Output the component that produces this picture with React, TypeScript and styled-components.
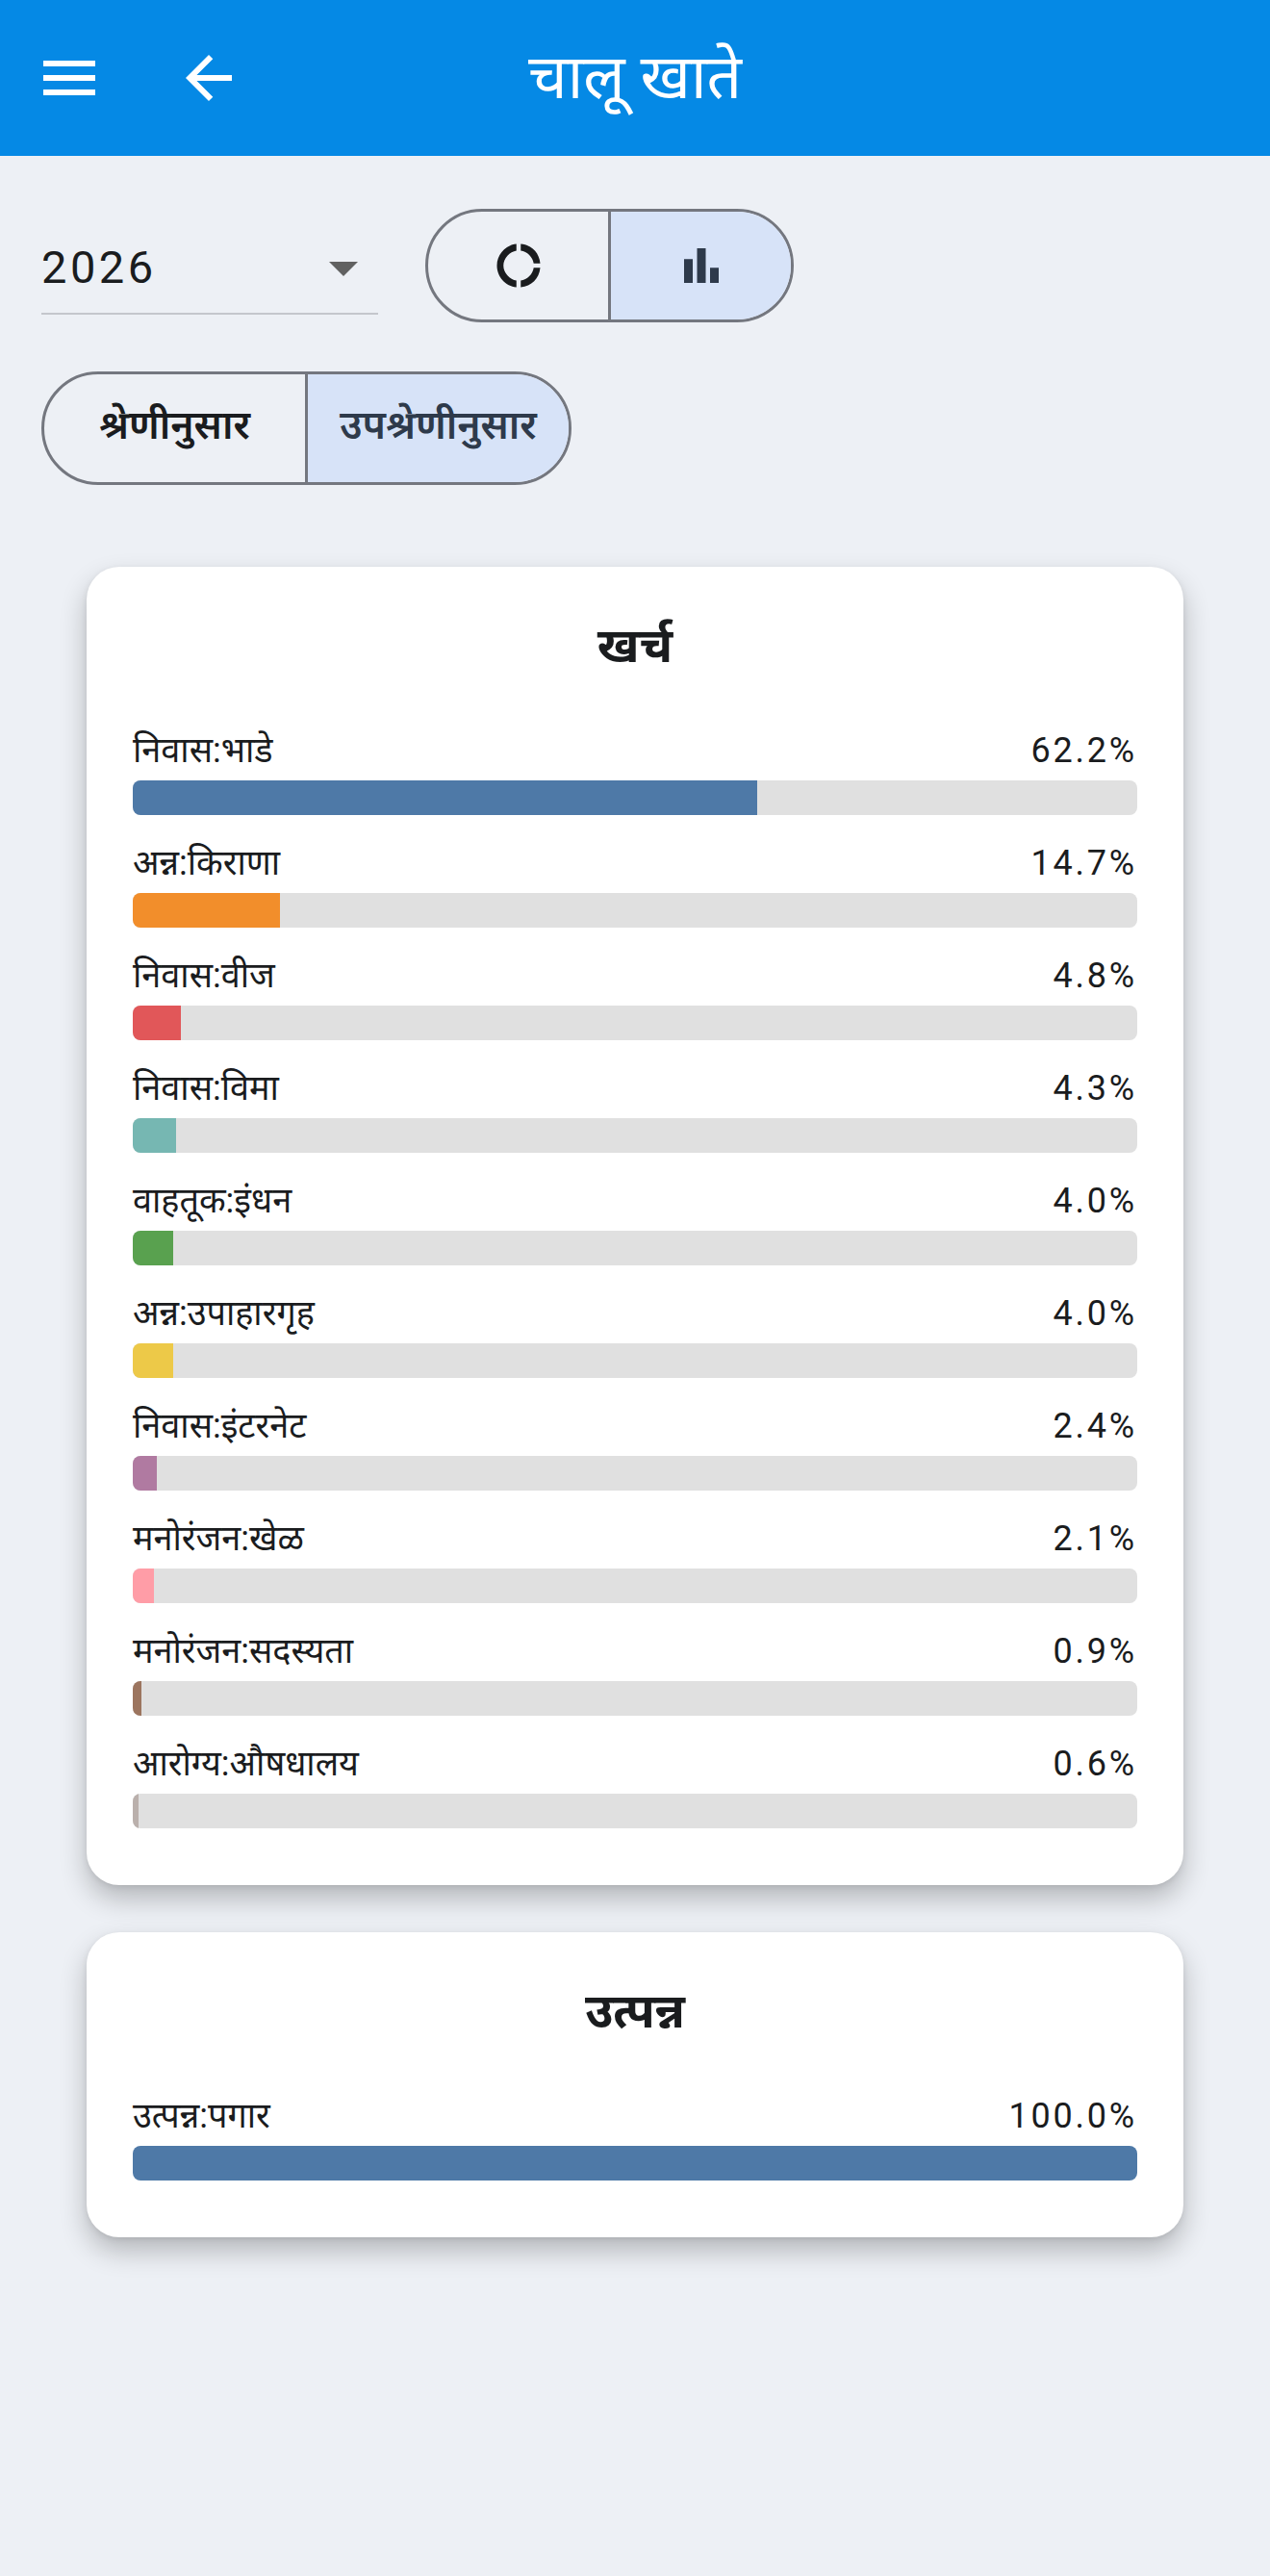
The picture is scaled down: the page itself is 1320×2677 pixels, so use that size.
import styled, { createGlobalStyle } from 'styled-components'

const GlobalStyle = createGlobalStyle`
  html, body {
    margin: 0;
    padding: 0;
    background: #edf0f5;
  }
  body {
    font-family: Roboto, "Noto Sans Devanagari", "Noto Sans", sans-serif;
    color: #1a1c1e;
  }
  * {
    box-sizing: border-box;
  }
`

const expenses: [string, number, string][] = [
  ['निवास:भाडे', 62.2, '#4e79a7'],
  ['अन्न:किराणा', 14.7, '#f28e2b'],
  ['निवास:वीज', 4.8, '#e15759'],
  ['निवास:विमा', 4.3, '#76b7b2'],
  ['वाहतूक:इंधन', 4.0, '#59a14f'],
  ['अन्न:उपाहारगृह', 4.0, '#edc948'],
  ['निवास:इंटरनेट', 2.4, '#b07aa1'],
  ['मनोरंजन:खेळ', 2.1, '#ff9da7'],
  ['मनोरंजन:सदस्यता', 0.9, '#9c755f'],
  ['आरोग्य:औषधालय', 0.6, '#bab0ac'],
]

const income: [string, number, string][] = [['उत्पन्न:पगार', 100.0, '#4e79a7']]

const Page = styled.div`
  min-height: 100vh;
  background: #edf0f5;
  padding-bottom: 120px;
`

const AppBar = styled.header`
  height: 162px;
  background: #0589e5;
  display: grid;
  grid-template-columns: 1fr auto 1fr;
  align-items: center;
  padding: 0 36px;
`

const Leading = styled.div`
  display: flex;
  align-items: center;
  gap: 73px;
`

const IconButton = styled.button`
  width: 72px;
  height: 72px;
  padding: 0;
  border: none;
  background: none;
  color: #fff;
  display: flex;
  align-items: center;
  justify-content: center;
  svg {
    width: 72px;
    height: 72px;
    fill: currentColor;
  }
`

const Title = styled.h1`
  margin: 0;
  font-size: 64px;
  line-height: 64px;
  font-weight: 400;
  color: #fff;
  white-space: nowrap;
`

const Controls = styled.div`
  padding: 55px 43px 0;
  display: flex;
  flex-direction: column;
  gap: 51px;
`

const ControlRow = styled.div`
  display: flex;
  align-items: flex-start;
  gap: 49px;
`

const Dropdown = styled.div`
  width: 350px;
  height: 110px;
  padding-top: 14px;
  display: flex;
  align-items: center;
  justify-content: space-between;
  border-bottom: 2px solid #c4c6cc;
`

const DropdownValue = styled.span`
  font-size: 47px;
  line-height: 56px;
  color: #1a1c1e;
  letter-spacing: 3.5px;
`

const DropArrow = styled.svg`
  width: 72px;
  height: 72px;
  fill: #616161;
`

const Segmented = styled.div<{ $width: number }>`
  width: ${p => p.$width}px;
  height: 118px;
  display: flex;
  border: 3px solid #74777f;
  border-radius: 59px;
  overflow: hidden;
`

const Segment = styled.div<{ $selected?: boolean }>`
  flex: 1;
  display: flex;
  align-items: center;
  justify-content: center;
  background: ${p => (p.$selected ? '#d7e3f8' : 'transparent')};
  color: ${p => (p.$selected ? '#2e3a4b' : '#1a1c1e')};
  font-size: 41px;
  font-weight: 600;
  white-space: nowrap;
  & + & {
    border-left: 3px solid #74777f;
  }
  svg {
    width: 54px;
    height: 54px;
    fill: currentColor;
  }
`

const Cards = styled.div`
  margin-top: 85px;
  padding: 0 90px;
  display: flex;
  flex-direction: column;
  gap: 49px;
`

const Card = styled.section`
  background: #fff;
  border-radius: 34px;
  padding: 52px 48px 59px;
  box-shadow: 0 14px 28px rgba(0, 0, 0, 0.24), 0 2px 6px rgba(0, 0, 0, 0.08);
`

const CardTitle = styled.h2`
  margin: 0 0 58px;
  text-align: center;
  font-size: 50px;
  line-height: 60px;
  font-weight: 700;
  color: #1a1c1e;
`

const Rows = styled.div`
  display: flex;
  flex-direction: column;
  gap: 29px;
`

const Row = styled.div`
  display: flex;
  flex-direction: column;
  gap: 10px;
`

const RowHead = styled.div`
  display: flex;
  justify-content: space-between;
  align-items: baseline;
  font-size: 36px;
  line-height: 42px;
  color: #1a1c1e;
`

const Percent = styled.span`
  letter-spacing: 2.8px;
`

const Track = styled.div`
  height: 36px;
  border-radius: 8px;
  background: #e0e0e0;
  overflow: hidden;
`

const Fill = styled.div<{ $color: string }>`
  height: 100%;
  background: ${p => p.$color};
`

function MenuIcon() {
  return (
    <svg viewBox="0 0 24 24">
      <path d="M3 18h18v-2H3v2zm0-5h18v-2H3v2zm0-7v2h18V6H3z" />
    </svg>
  )
}

function BackIcon() {
  return (
    <svg viewBox="0 -960 960 960">
      <path d="m313-440 224 224-57 56-320-320 320-320 57 56-224 224h487v80H313Z" />
    </svg>
  )
}

function DonutIcon() {
  return (
    <svg viewBox="0 0 24 24">
      <path d="M11 5.08V2c-5 .5-9 4.81-9 10s4 9.5 9 10v-3.08c-3-.48-6-3.4-6-6.92s3-6.44 6-6.92zM18.97 11H22c-.47-5-4-8.53-9-9v3.08C16 5.51 18.54 8 18.97 11zM13 18.92V22c5-.47 8.530-4 9-9h-3.03c-.43 3-2.97 5.49-5.970 5.92z" />
    </svg>
  )
}

function BarChartIcon() {
  return (
    <svg viewBox="0 -960 960 960">
      <path d="M640-160v-280h160v280H640Zm-240 0v-640h160v640H400Zm-240 0v-440h160v440H160Z" />
    </svg>
  )
}

function BreakdownCard({ title, items }: { title: string; items: [string, number, string][] }) {
  return (
    <Card>
      <CardTitle>{title}</CardTitle>
      <Rows>
        {items.map(([label, pct, color]) => (
          <Row key={label}>
            <RowHead>
              <span>{label}</span>
              <Percent>{pct.toFixed(1)}%</Percent>
            </RowHead>
            <Track>
              <Fill $color={color} style={{ width: `${pct}%` }} />
            </Track>
          </Row>
        ))}
      </Rows>
    </Card>
  )
}

export default function App() {
  return (
    <Page>
      <GlobalStyle />
      <AppBar>
        <Leading>
          <IconButton aria-label="menu">
            <MenuIcon />
          </IconButton>
          <IconButton aria-label="back">
            <BackIcon />
          </IconButton>
        </Leading>
        <Title>चालू खाते</Title>
        <div />
      </AppBar>

      <Controls>
        <ControlRow>
          <Dropdown>
            <DropdownValue>2026</DropdownValue>
            <DropArrow viewBox="0 0 24 24">
              <path d="M7 10l5 5 5-5z" />
            </DropArrow>
          </Dropdown>
          <Segmented $width={383}>
            <Segment>
              <DonutIcon />
            </Segment>
            <Segment $selected>
              <BarChartIcon />
            </Segment>
          </Segmented>
        </ControlRow>
        <ControlRow>
          <Segmented $width={551}>
            <Segment>श्रेणीनुसार</Segment>
            <Segment $selected>उपश्रेणीनुसार</Segment>
          </Segmented>
        </ControlRow>
      </Controls>

      <Cards>
        <BreakdownCard title="खर्च" items={expenses} />
        <BreakdownCard title="उत्पन्न" items={income} />
      </Cards>
    </Page>
  )
}
